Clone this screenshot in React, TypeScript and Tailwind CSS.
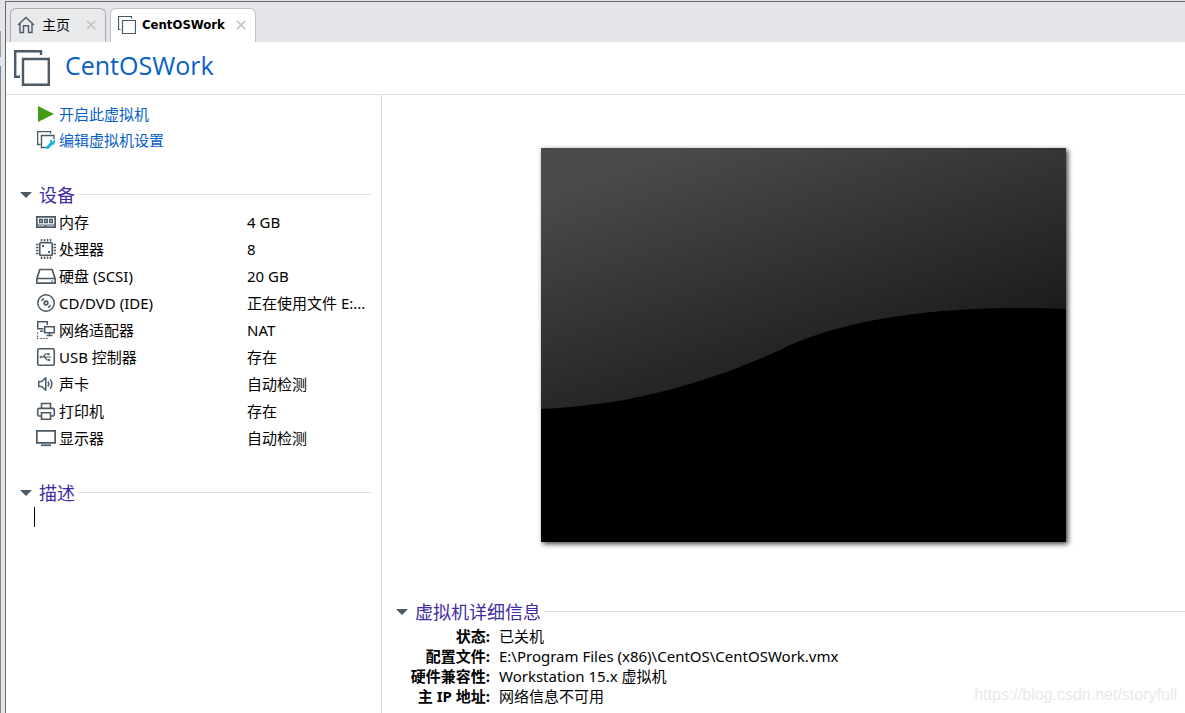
import type { ReactNode } from "react";

const INK = "#4a5a66";

function Icon({ children }: { children: ReactNode }) {
  return (
    <svg width="20" height="21" viewBox="0 0 20 21" fill="none" stroke={INK} strokeWidth="1.7" className="shrink-0" aria-hidden="true">
      {children}
    </svg>
  );
}

function MemoryIcon() {
  return (
    <Icon>
      <path d="M.85 4.85h18.3v10.3H.85z" />
      <path d="M3.7 7.500h2.600v3H3.700zM8.700 7.500h2.600v3H8.700zM13.700 7.500h2.600v3h-2.600z" strokeWidth="1.500" />
      <path d="M1 13h7.5l1 1.5 1-1.5H19" strokeWidth="1.2" />
    </Icon>
  );
}

function CpuIcon() {
  return (
    <Icon>
      <rect x="3.75" y="3.75" width="12.5" height="12.5" rx="1" />
      <path d="M5.5 0v2.4M8.5 0v2.4M11.5 0v2.4M14.5 0v2.4M5.5 17.6V20M8.5 17.6V20M11.5 17.6V20M14.5 17.6V20" strokeWidth="1.5" />
      <path d="M0 5.5h2.4M0 8.5h2.4M0 11.5h2.4M0 14.5h2.4M17.6 5.5H20M17.6 8.5H20M17.6 11.5H20M17.6 14.5H20" strokeWidth="1.5" />
      <path d="M6 7h2M12 13h2" strokeWidth="2" />
    </Icon>
  );
}

function DiskIcon() {
  return (
    <Icon>
      <path d="M.85 12.75 3.8 3.5h12.4l2.95 9.25v4.4H.85zM.85 12.5h18.3" strokeLinejoin="round" />
      <path d="M15 15h2" strokeWidth="1.2" />
    </Icon>
  );
}

function DiscIcon() {
  return (
    <Icon>
      <circle cx="10" cy="10" r="8.2" strokeWidth="1.5" />
      <circle cx="10" cy="10" r="1.8" />
      <path d="M5.500 8A5 5 0 0 1 8 5.500M14.500 12a5 5 0 0 1-2.500 2.500" strokeWidth="1.500" />
    </Icon>
  );
}

function NetworkIcon() {
  return (
    <Icon>
      <path d="M7.5 8.75H1.75v-7h9.5V5" strokeWidth="1.5" />
      <path d="M8.75 6.75h9.5v6h-9.5zM13.5 13v2.5M10.5 15.5h6M4 11.2h3.5" strokeWidth="1.5" />
      <path d="M1.5 12.5v1.5M1.5 15.5V17M1 18.5h1.6M4.2 18.5h1.6M7.2 18.5h1.6M10.2 18.5h1.6" strokeWidth="1.2" />
    </Icon>
  );
}

function UsbIcon() {
  return (
    <Icon>
      <rect x="1.75" y="1.75" width="16.5" height="16.5" rx="1.5" strokeWidth="1.6" />
      <path d="M5 10h10M7 10l2.5-3H12M8.5 10l2.5 3h1.5" strokeWidth="1.2" />
      <path d="M5.5 8.3v3.4L3.2 10zM11.5 6h2v2h-2zM12 12h2v2h-2z" fill={INK} stroke="none" />
    </Icon>
  );
}

function SoundIcon() {
  return (
    <Icon>
      <path d="M2.75 7.5h3l4-3.7v12.4l-4-3.7h-3z" strokeWidth="1.5" strokeLinejoin="round" />
      <path d="M12 7.5q1.600 2.500 0 5M14.200 5.300q3.200 4.700 0 9.400" strokeWidth="1.500" />
    </Icon>
  );
}

function PrinterIcon() {
  return (
    <Icon>
      <path d="M5.500 7V2.500h9V7M5.500 15H3q-1.300 0-1.300-1.300V9Q1.700 7.400 3.300 7.400h13.400q1.600 0 1.600 1.600v4.700Q18.300 15 17 15h-2.500" strokeWidth="1.600" />
      <path d="M5.500 11.700h9v6.500h-9z" strokeWidth="1.600" />
    </Icon>
  );
}

function DisplayIcon() {
  return (
    <Icon>
      <path d="M.850 2.850h18.300v12H.850z" />
      <path d="M5 17.250h10" />
    </Icon>
  );
}

function StackIcon({ className }: { className: string }) {
  return (
    <svg viewBox="0 0 36 36" fill="none" stroke={INK} strokeWidth="2.400" className={className} aria-hidden="true">
      <path d="M27 5V1.200H1.200v25.500H6" />
      <path d="M9 9h25.800v25.800H9z" />
    </svg>
  );
}

function HomeIcon() {
  return (
    <svg width="18" height="18" viewBox="0 0 18 18" fill="none" stroke={INK} strokeWidth="1.400" aria-hidden="true">
      <path d="M1 9 9 1.500 17 9M3 7.800v8.700h3.500V9.800h5v6.700H15V7.800" />
    </svg>
  );
}

function EditIcon() {
  return (
    <svg width="18" height="18" viewBox="0 0 18 18" fill="none" stroke={INK} aria-hidden="true">
      <path d="M13.500 2.500v-2H.600v13h3" strokeWidth="1.400" />
      <path d="M9 16.500H4.500v-12h12.500V8" strokeWidth="1.400" />
      <path d="m9.500 17.500 5.500-5.500" stroke="#12b3dc" strokeWidth="3" />
      <path d="M14 9v3.600h3.600M18 9.500l-3 3.200" stroke="#12b3dc" strokeWidth="1.900" />
    </svg>
  );
}

function CloseButton({ label }: { label: string }) {
  return (
    <button type="button" aria-label={label} className="flex size-3 items-center justify-center">
      <svg width="10" height="10" viewBox="0 0 10 10" stroke="#c6c6c6" strokeWidth="1.700" aria-hidden="true">
        <path d="m.8.8 8.400 8.400M9.200.8.8 9.200" />
      </svg>
    </button>
  );
}

function SectionHeading({ children }: { children: ReactNode }) {
  return (
    <h2 className="flex h-[27px] items-center text-lg text-[#412ba3]">
      <button type="button" className="flex items-center gap-[7px]">
        <svg width="12" height="6" viewBox="0 0 12 6" aria-hidden="true">
          <path d="M0 0h12L6 6z" fill={INK} />
        </svg>
        {children}
      </button>
      <span className="ml-[3px] h-px grow bg-[#dedede]" />
    </h2>
  );
}

const devices = [
  { icon: <MemoryIcon />, name: "内存", value: "4 GB" },
  { icon: <CpuIcon />, name: "处理器", value: "8" },
  { icon: <DiskIcon />, name: "硬盘 (SCSI)", value: "20 GB" },
  { icon: <DiscIcon />, name: "CD/DVD (IDE)", value: "正在使用文件 E:..." },
  { icon: <NetworkIcon />, name: "网络适配器", value: "NAT" },
  { icon: <UsbIcon />, name: "USB 控制器", value: "存在" },
  { icon: <SoundIcon />, name: "声卡", value: "自动检测" },
  { icon: <PrinterIcon />, name: "打印机", value: "存在" },
  { icon: <DisplayIcon />, name: "显示器", value: "自动检测" },
];

const details = [
  ["状态:", "已关机"],
  ["配置文件:", "E:\\Program Files (x86)\\CentOS\\CentOSWork.vmx"],
  ["硬件兼容性:", "Workstation 15.x 虚拟机"],
  ["主 IP 地址:", "网络信息不可用"],
];

function Tabs() {
  return (
    <nav className="flex h-10 items-end gap-1 bg-[#e4e5e8] pl-1">
      <div className="flex h-[34px] items-center gap-[7px] rounded-t-md border border-b-0 border-[#a9abad] bg-[#e9eaec] pr-2 pb-[2px] pl-[6px]">
        <HomeIcon />
        <button type="button" className="mr-[8px] text-sm">主页</button>
        <CloseButton label="关闭主页" />
      </div>
      <div className="flex h-[34px] items-center gap-[6px] rounded-t-md border border-b-0 border-[#c0c1c3] bg-white pr-2 pb-[2px] pl-[7px]">
        <svg width="18" height="18" viewBox="0 0 18 18" fill="none" stroke={INK} strokeWidth="1.200" aria-hidden="true">
          <path d="M13.500 2.500v-2H.5v13h2" />
          <path d="M4.500 4.500h13v13h-13z" />
        </svg>
        <button type="button" className="mr-1 font-['DejaVu_Sans_Condensed','DejaVu_Sans',sans-serif] text-[13px] font-bold">
          CentOSWork
        </button>
        <CloseButton label="关闭 CentOSWork" />
      </div>
    </nav>
  );
}

function Preview() {
  return (
    <svg
      viewBox="0 0 525 394"
      className="w-full max-w-[525px] shadow-[2px_2px_5px_rgba(0,0,0,0.75)]"
      role="img"
      aria-label="CentOSWork"
    >
      <defs>
        <linearGradient id="screen" gradientUnits="userSpaceOnUse" x1="13" y1="38" x2="103" y2="303">
          <stop offset="0" stopColor="#4b4b4b" />
          <stop offset="1" stopColor="#1c1c1c" />
        </linearGradient>
      </defs>
      <path d="M0 0h525v394H0z" fill="url(#screen)" />
      <path d="M0 261C85 258 165 236 239 202 300 172 395 156 525 161V394H0z" fill="#000" />
    </svg>
  );
}

export default function App() {
  return (
    <div className="relative flex min-h-screen bg-[#e4e5e8] font-['Noto_Sans','Noto_Sans_CJK_SC',sans-serif] text-[15px] text-black">
      <div className="flex w-px flex-col">
        <span className="mt-[31px] h-[26px] bg-[#9a9ca2]" />
        <span className="mt-[9px] grow bg-[#81848f]" />
      </div>
      <div className="mt-px ml-1 flex min-w-0 grow flex-col border-t border-l border-[#66686b] bg-white">
        <Tabs />
        <header className="flex h-[53px] items-center gap-[15px] border-b border-[#dedede] pl-2">
          <StackIcon className="size-9" />
          <h1 className="pb-[6px] font-['Open_Sans',sans-serif] text-[25px] leading-8 text-[#0860c6]">CentOSWork</h1>
        </header>
        <div className="flex grow">
          <aside className="w-[376px] shrink-0 border-r border-[#dedede] pt-[6px] pr-[10px] pl-[14px]">
            <div className="flex flex-col pl-[17px] text-[#0860c6]">
              <button type="button" className="flex h-[26px] items-center gap-1">
                <svg width="18" height="18" viewBox="0 0 18 18" aria-hidden="true">
                  <path d="M1 1v16l16-8z" fill="#439a14" />
                </svg>
                开启此虚拟机
              </button>
              <button type="button" className="flex h-[26px] items-center gap-1">
                <EditIcon />
                编辑虚拟机设置
              </button>
            </div>
            <section className="pt-7">
              <SectionHeading>设备</SectionHeading>
              <table className="mt-px ml-4 table-fixed">
                <tbody>
                  {devices.map((d) => (
                    <tr key={d.name} className="h-[27px]">
                      <th scope="row" className="w-[211px] p-0 font-normal">
                        <span className="flex h-[27px] items-center gap-[3px]">
                          {d.icon}
                          {d.name}
                        </span>
                      </th>
                      <td className="p-0 whitespace-nowrap">{d.value}</td>
                    </tr>
                  ))}
                </tbody>
              </table>
            </section>
            <section className="pt-[27px]">
              <SectionHeading>描述</SectionHeading>
              <div className="mt-px flex pl-[14px]">
                <span className="h-5 w-px bg-black" />
                <textarea aria-label="描述" rows={1} className="h-5 grow resize-none outline-none" />
              </div>
            </section>
          </aside>
          <main className="flex min-w-0 grow flex-col pt-[53px]">
            <div className="flex justify-center pl-10">
              <Preview />
            </div>
            <section className="pt-14 pl-[14px]">
              <SectionHeading>虚拟机详细信息</SectionHeading>
              <dl className="mt-px grid grid-cols-[94px_1fr] gap-x-[9px] leading-5">
                {details.map(([label, value]) => (
                  <div key={label} className="contents">
                    <dt className="text-right font-bold whitespace-nowrap">{label}</dt>
                    <dd>{value}</dd>
                  </div>
                ))}
              </dl>
            </section>
          </main>
        </div>
      </div>
      <p className="absolute right-2 bottom-2 font-['Liberation_Sans',sans-serif] text-base leading-5 text-[#e9e9e9]">
        https://blog.csdn.net/storyfull
      </p>
    </div>
  );
}
